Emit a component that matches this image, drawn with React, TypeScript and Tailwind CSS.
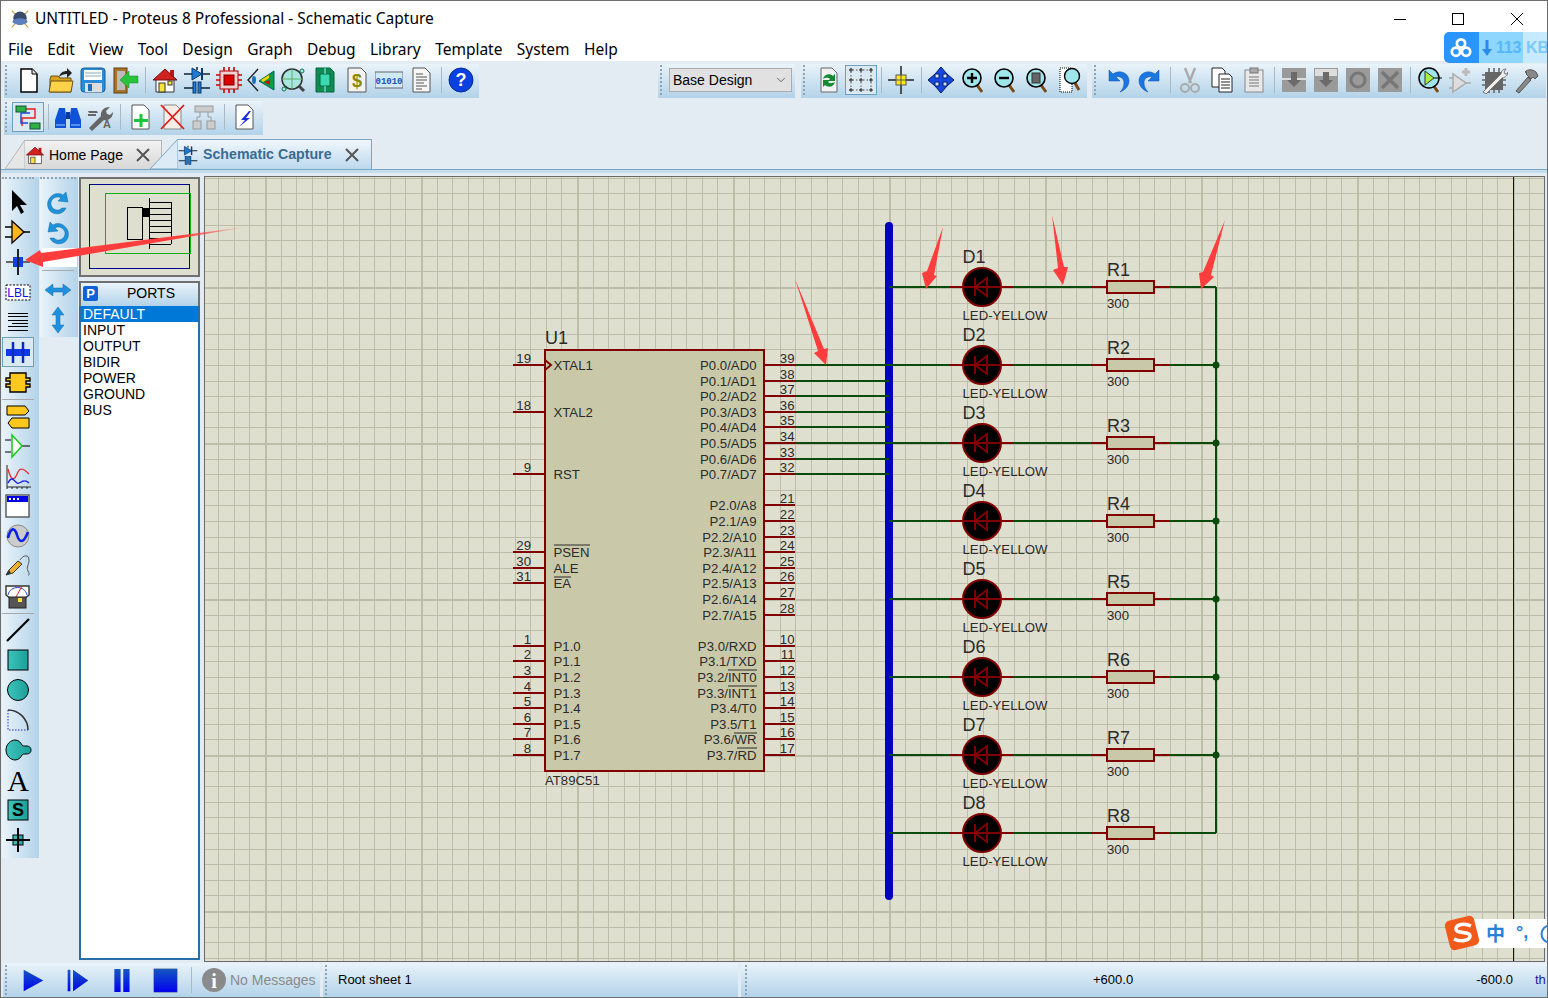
import React from "react";
import { ChevronDown } from "lucide-react";

const Ico = ({ children }: { children: React.ReactNode }) => (
  <svg viewBox="0 0 28 28" className="h-7 w-7">
    {children}
  </svg>
);

const Mag = ({ children }: { children?: React.ReactNode }) => (
  <Ico>
    <path d="M18 19l5 7" stroke="#7a4a12" strokeWidth="3" />
    <circle cx="13" cy="12" r="9" fill="#9fe6ec" stroke="#000" strokeWidth="1.6" />
    {children}
  </Ico>
);

const CloseX = () => (
  <svg viewBox="0 0 14 14" className="h-[14px] w-[14px]">
    <path d="M1 1l12 12M13 1L1 13" stroke="#555" strokeWidth="2" />
  </svg>
);

// ---- toolbar icons ----
const icons: Record<string, React.ReactNode> = {
  new: (
    <Ico>
      <path d="M6 3h11l5 5v18H6z" fill="#fff" stroke="#000" strokeWidth="1.5" />
      <path d="M17 3v5h5" fill="#ddd" stroke="#000" />
    </Ico>
  ),
  open: (
    <Ico>
      <path d="M3 13l1-3h7l2 2h11v14H3z" fill="#d9a21c" stroke="#6a5010" />
      <path d="M2 26l2-11h22l-2 11z" fill="#ffd24a" stroke="#6a5010" />
      <path d="M12 11c1-4 4-6 8-6V2l5 5-5 5V8c-3 0-6 1-8 3z" fill="#222" />
    </Ico>
  ),
  save: (
    <Ico>
      <rect x="2" y="2" width="24" height="24" rx="3" fill="#2a8bd6" stroke="#1a5f9c" />
      <rect x="5" y="4" width="18" height="10" fill="#fff" />
      <path d="M6 7h16M6 10h16" stroke="#8ab" />
      <rect x="6" y="17" width="17" height="9" fill="#ddd" />
      <rect x="9" y="18" width="4" height="7" fill="#1f6fb5" />
    </Ico>
  ),
  exit: (
    <Ico>
      <rect x="3" y="2" width="13" height="25" fill="#a9742a" stroke="#5e3f0f" />
      <rect x="6" y="5" width="8" height="19" fill="#bbb" />
      <path d="M27 10h-9V5l-9 9 9 8v-5h9z" fill="#28c23c" stroke="#1a8a2a" strokeWidth=".5" />
    </Ico>
  ),
  home: (
    <Ico>
      <path d="M5 13h18v13H5z" fill="#fff" stroke="#333" />
      <path d="M19 4h4v8h-4z" fill="#c01818" />
      <path d="M14 3L2 14h24z" fill="#d02020" stroke="#701010" />
      <rect x="8" y="17" width="6" height="9" fill="#ffe23a" stroke="#333" />
      <rect x="17" y="15" width="4" height="4" fill="#ffe23a" stroke="#333" />
    </Ico>
  ),
  comp: (
    <Ico>
      <path d="M1 8h26M1 22h9M18 22h9M14 1v3" stroke="#123" strokeWidth="1.5" />
      <path d="M9 2l10 6-10 6z" fill="#1e7ad0" stroke="#0b3a70" />
      <path d="M19 2v12" stroke="#0b3a70" strokeWidth="2" />
      <rect x="10" y="16" width="3" height="11" fill="#1e7ad0" stroke="#0b3a70" />
      <rect x="15" y="16" width="3" height="11" fill="#1e7ad0" stroke="#0b3a70" />
    </Ico>
  ),
  chip: (
    <Ico>
      <rect x="5" y="5" width="18" height="18" fill="#f4d0d0" stroke="#a00" />
      <rect x="9" y="9" width="10" height="10" fill="#d80000" stroke="#700" />
      <path d="M1 9h4M1 14h4M1 19h4M23 9h4M23 14h4M23 19h4M9 1v4M14 1v4M19 1v4M9 23v4M14 23v4M19 23v4" stroke="#c00" strokeWidth="1.6" />
    </Ico>
  ),
  eye: (
    <Ico>
      <path d="M11 3L1 14l10 11" fill="none" stroke="#222" strokeWidth="1.4" />
      <ellipse cx="7" cy="14" rx="2" ry="4" fill="#1e6fc0" />
      <path d="M27 5v19l-15-9z" fill="#0a9a48" stroke="#065" />
      <path d="M14 14l8-5v3l-6 4z" fill="#ffd800" />
      <path d="M17 16l6-2v5z" fill="#d01010" />
    </Ico>
  ),
  scope: (
    <Ico>
      <circle cx="13" cy="13" r="10" fill="#a9e6e0" stroke="#333" strokeWidth="1.6" />
      <path d="M13 3v20M3 13h20" stroke="#5ab06a" />
      <circle cx="23" cy="5" r="2" fill="#8fd" stroke="#265" />
      <circle cx="5" cy="23" r="2" fill="#8fd" stroke="#265" />
      <path d="M20 20l5 5" stroke="#444" strokeWidth="3" />
    </Ico>
  ),
  pcb: (
    <Ico>
      <path d="M5 2h14l4 4v20H5z" fill="#128a52" stroke="#064" />
      <rect x="9" y="8" width="10" height="12" fill="#3cd9b0" stroke="#064" />
      <path d="M14 2v6M14 20v6" stroke="#8fe" />
    </Ico>
  ),
  dollar: (
    <Ico>
      <path d="M5 2h13l5 5v19H5z" fill="#f2f2f2" stroke="#555" />
      <text x="14" y="21" textAnchor="middle" fontSize="18" fontWeight="700" fill="#8a8a00">$</text>
    </Ico>
  ),
  bin: (
    <Ico>
      <rect x="0" y="6" width="28" height="16" fill="#cfe9f5" stroke="#667" />
      <text x="14" y="18" textAnchor="middle" fontSize="9" fontWeight="700" fill="#1a4fc0" fontFamily="Liberation Mono">01010</text>
    </Ico>
  ),
  page: (
    <Ico>
      <path d="M6 2h12l5 5v19H6z" fill="#f6f6f6" stroke="#555" />
      <path d="M9 8h7M9 11h11M9 14h11M9 17h8M9 20h11M9 23h6" stroke="#555" />
    </Ico>
  ),
  help: (
    <Ico>
      <circle cx="14" cy="14" r="12" fill="#0a3fe0" stroke="#0a2aa0" />
      <text x="14" y="20" textAnchor="middle" fontSize="18" fontWeight="700" fill="#fff">?</text>
    </Ico>
  ),
  hier: (
    <Ico>
      <path d="M12 6h9v9H8v8" fill="none" stroke="#e02020" strokeWidth="1.4" />
      <path d="M16 10H7v10h7" fill="none" stroke="#2040e0" strokeWidth="1.4" />
      <rect x="2" y="3" width="10" height="6" fill="#30b040" stroke="#154" />
      <rect x="16" y="20" width="10" height="6" fill="#30b040" stroke="#154" />
    </Ico>
  ),
  binoc: (
    <Ico>
      <path d="M5 5h6l1 8v12H1v-8zM17 5h6l4 12v8H16V13z" fill="#0f52d8" />
      <rect x="12" y="9" width="4" height="7" fill="#0a3aa0" />
      <path d="M2 22h9M17 22h9" stroke="#9cf" />
    </Ico>
  ),
  wrenchA: (
    <Ico>
      <path d="M2 8h9l1 2h-9zM2 11h8v2H2zM3 25l12-12c-1-4 2-9 9-9l-4 4 1 3 3 1 3-3c0 6-5 9-9 8L6 28z" fill="#666" />
      <text x="21" y="25" textAnchor="middle" fontSize="11" fontWeight="700" fill="#666">A</text>
    </Ico>
  ),
  plus: (
    <Ico>
      <path d="M6 2h12l5 5v19H6z" fill="#fff" stroke="#555" />
      <path d="M15 11v13M8 17.500h14" stroke="#18c83a" strokeWidth="3" />
    </Ico>
  ),
  xpage: (
    <Ico>
      <path d="M6 2h12l5 5v19H6z" fill="#f6eee6" stroke="#888" />
      <path d="M3 2l23 24M26 2L3 26" stroke="#e01818" strokeWidth="1.8" />
    </Ico>
  ),
  tree: (
    <Ico>
      <rect x="5" y="3" width="18" height="6" fill="#ccc" stroke="#999" />
      <rect x="3" y="18" width="8" height="8" fill="#ccc" stroke="#999" />
      <rect x="17" y="18" width="8" height="8" fill="#ccc" stroke="#999" />
      <path d="M10 9v5H7v4M18 9v5h3v4" fill="none" stroke="#999" />
    </Ico>
  ),
  bolt: (
    <Ico>
      <path d="M6 2h12l5 5v19H6z" fill="#fff" stroke="#555" />
      <path d="M19 8l-8 9h4l-6 7 11-9h-4l5-7z" fill="#1a2fe0" />
    </Ico>
  ),
  refresh: (
    <Ico>
      <path d="M6 2h11l5 5v19H6z" fill="#f2f2f2" stroke="#666" />
      <path d="M8 13c1-5 7-6 10-3l2-2v7h-7l2-2c-2-2-5-1-7 0zM20 16c-1 5-7 6-10 3l-2 2v-7h7l-2 2c2 2 5 1 7 0z" fill="#148a32" />
    </Ico>
  ),
  grid: (
    <Ico>
      <path d="M2 4h24M2 14h24M2 24h24M4 2v24M14 2v24M24 2v24" stroke="#555" strokeDasharray="1.500 2" />
      <path d="M2 4h4M4 2v4M12 4h4M14 2v4M22 4h4M24 2v4M2 14h4M4 12v4M12 14h4M14 12v4M22 14h4M24 12v4M2 24h4M4 22v4M12 24h4M14 22v4M22 24h4M24 22v4" stroke="#333" />
    </Ico>
  ),
  snap: (
    <Ico>
      <path d="M14 0v28M1 14h26" stroke="#222" strokeWidth="1.5" />
      <rect x="9" y="9" width="10" height="10" fill="#ffe81a" stroke="#555" />
      <path d="M14 9v10M9 14h10" stroke="#555" />
    </Ico>
  ),
  move: (
    <Ico>
      <path d="M14 1l6 7h-4v4h4V8l7 6-7 6v-4h-4v4h4l-6 7-6-7h4v-4H8v4l-7-6 7-6v4h4V8H8z" fill="#1448e0" stroke="#061a70" />
    </Ico>
  ),
  zin: (
    <Mag>
      <path d="M13 7v10M8 12h10" stroke="#000" strokeWidth="2.4" />
    </Mag>
  ),
  zout: (
    <Mag>
      <path d="M8 12h10" stroke="#000" strokeWidth="2.4" />
    </Mag>
  ),
  zfit: (
    <Mag>
      <rect x="9" y="7" width="8" height="10" fill="#666" stroke="#333" />
    </Mag>
  ),
  zarea: (
    <Ico>
      <rect x="5" y="2" width="12" height="24" fill="#fff" stroke="#000" strokeDasharray="1 1" />
      <path d="M20 17l4 7" stroke="#7a4a12" strokeWidth="3" />
      <circle cx="17" cy="10" r="7.500" fill="#9fe6ec" stroke="#000" strokeWidth="1.4" />
    </Ico>
  ),
  undo: (
    <Ico>
      <path d="M5 4v11h11l-4-4c4-1 8 1 8 6 0 4-2 7-4 9 5-2 9-6 9-11 0-8-9-12-16-7z" fill="#1a76e0" stroke="#0e4fb0" strokeWidth=".5" />
    </Ico>
  ),
  redo: (
    <Ico>
      <path d="M23 4v11H12l4-4c-4-1-8 1-8 6 0 4 2 7 4 9-5-2-9-6-9-11 0-8 9-12 16-7z" fill="#1a76e0" stroke="#0e4fb0" strokeWidth=".5" />
    </Ico>
  ),
  cut: (
    <Ico>
      <path d="M9 2l6 15M19 2l-6 15" stroke="#aaa" strokeWidth="2.400" />
      <circle cx="9" cy="22" r="4" fill="none" stroke="#aaa" strokeWidth="2" />
      <circle cx="19" cy="22" r="4" fill="none" stroke="#aaa" strokeWidth="2" />
    </Ico>
  ),
  copy: (
    <Ico>
      <path d="M4 2h10l3 3v16H4z" fill="#fff" stroke="#222" />
      <path d="M11 8h10l3 3v15H11z" fill="#fff" stroke="#222" />
      <path d="M13 13h9M13 16h9M13 19h9M13 22h9" stroke="#222" />
    </Ico>
  ),
  paste: (
    <Ico>
      <rect x="5" y="4" width="18" height="22" fill="#e8e8e8" stroke="#888" />
      <rect x="10" y="2" width="8" height="5" fill="#aaa" stroke="#777" />
      <path d="M9 11h10M9 14h10M9 17h10M9 20h10" stroke="#777" />
    </Ico>
  ),
  bcopy: (
    <Ico>
      <rect x="2" y="2" width="24" height="24" fill="#9a9a9a" />
      <path d="M2 13h24" stroke="#ddd" strokeWidth="2" />
      <path d="M11 6h6v8h4l-7 7-7-7h4z" fill="#6a6a6a" />
    </Ico>
  ),
  bmove: (
    <Ico>
      <rect x="2" y="2" width="24" height="24" fill="#9a9a9a" />
      <rect x="3" y="3" width="22" height="7" fill="#ddd" />
      <path d="M11 6h6v8h4l-7 7-7-7h4z" fill="#6a6a6a" />
    </Ico>
  ),
  brot: (
    <Ico>
      <rect x="2" y="2" width="24" height="24" fill="#9a9a9a" />
      <circle cx="14" cy="14" r="7" fill="none" stroke="#777" strokeWidth="3" />
    </Ico>
  ),
  bdel: (
    <Ico>
      <rect x="2" y="2" width="24" height="24" fill="#9a9a9a" />
      <path d="M6 6l16 16M22 6L6 22" stroke="#777" strokeWidth="3.500" />
    </Ico>
  ),
  probe: (
    <Ico>
      <path d="M17 19l5 7" stroke="#7a4a12" strokeWidth="3" />
      <circle cx="13" cy="12" r="10" fill="#9fe6ec" stroke="#000" strokeWidth="1.500" />
      <path d="M9 5v14l9-7z" fill="#a6f03c" stroke="#333" />
      <path d="M18 12h8" stroke="#000" />
    </Ico>
  ),
  gate: (
    <Ico>
      <path d="M5 8v18l13-9z" fill="#ddd" stroke="#aaa" strokeWidth="1.500" />
      <path d="M1 12h4M1 22h4M18 17h5" stroke="#aaa" strokeWidth="1.500" />
      <path d="M18 2v8M14 6h8" stroke="#bbb" strokeWidth="3" />
    </Ico>
  ),
  chipTool: (
    <Ico>
      <rect x="5" y="6" width="18" height="18" fill="#666" />
      <path d="M2 9h3M2 14h3M2 19h3M23 9h3M23 14h3M23 19h3M9 2v4M14 2v4M19 2v4M9 24v3M14 24v3M19 24v3" stroke="#666" strokeWidth="1.600" />
      <path d="M3 26L21 8c0-3 2-5 5-5l-2 3 1 2 2 0 1-2c0 3-3 6-6 6L6 28z" fill="#eee" stroke="#777" />
    </Ico>
  ),
  hammer: (
    <Ico>
      <path d="M4 25L16 11l3 3L7 27z" fill="#888" stroke="#555" />
      <path d="M13 6c3-3 7-3 11 0l2 4-3 3-2-2-2 2-5-5 1-1z" fill="#888" stroke="#555" />
    </Ico>
  ),
  // left toolbar
  arrow: (
    <Ico>
      <path d="M8 2v21l5-5 4 8 3-2-4-7h7z" fill="#000" />
    </Ico>
  ),
  buffer: (
    <Ico>
      <path d="M1 9h7M1 19h7M18 14h8" stroke="#000" strokeWidth="1.500" />
      <path d="M8 3v22l12-11z" fill="#ffb81c" stroke="#000" strokeWidth="1.300" />
    </Ico>
  ),
  junction: (
    <Ico>
      <path d="M14 1v26" stroke="#222" strokeWidth="2" />
      <path d="M2 14h24" stroke="#666" strokeWidth="2" />
      <rect x="9" y="9" width="10" height="10" fill="#1040e0" />
      <path d="M14 8v12" stroke="#222" strokeWidth="2" />
    </Ico>
  ),
  lbl: (
    <Ico>
      <rect x="2" y="7" width="24" height="15" fill="#fff" stroke="#000" strokeDasharray="2 1.500" />
      <text x="14" y="19" textAnchor="middle" fontSize="12" fill="#1010e0">LBL</text>
    </Ico>
  ),
  lines: (
    <Ico>
      <path d="M4 5.500h20M4 8.500h20M4 12.500h20M8 15.500h16M4 18.500h20M4 22.500h20" stroke="#000" />
    </Ico>
  ),
  bus: (
    <Ico>
      <rect x="2" y="11" width="24" height="7" fill="#1038e8" />
      <path d="M9 4v21M19 4v21" stroke="#0b2ac0" strokeWidth="2.500" />
    </Ico>
  ),
  sub: (
    <Ico>
      <path d="M6 5h16v5h4v3h-4v3h4v3h-4v5H6v-5H2v-3h4v-3H2v-3h4z" fill="#ffc81c" stroke="#000" strokeWidth="1.400" />
    </Ico>
  ),
  term: (
    <Ico>
      <path d="M3 4h18l4 5-4 4H3z" fill="#ffc81c" stroke="#000" />
      <path d="M25 16H8l-4 5 4 5h17z" fill="#ffc81c" stroke="#000" />
    </Ico>
  ),
  pin: (
    <Ico>
      <path d="M1 8h6M1 20h6M18 14h8" stroke="#000" />
      <path d="M8 3v22l10-11z" fill="#fff" stroke="#1cc81c" strokeWidth="1.500" />
    </Ico>
  ),
  graph: (
    <Ico>
      <path d="M3 3v22h24M3 25v2M8 25v2M13 25v2M18 25v2M23 25v2" stroke="#222" fill="none" />
      <path d="M4 7c3 12 6 12 9 5s6-6 12 0" fill="none" stroke="#e83030" strokeWidth="1.400" />
      <path d="M4 21c4-8 6-2 9 0s6-6 12 0" fill="none" stroke="#2020e0" strokeWidth="1.400" />
    </Ico>
  ),
  win: (
    <Ico>
      <rect x="2" y="3" width="23" height="22" fill="#fff" stroke="#555" strokeWidth="1.400" />
      <rect x="3" y="4" width="21" height="6" fill="#0000e8" />
      <path d="M5 7h2M9 7h2M13 7h2" stroke="#fff" strokeWidth="2" />
    </Ico>
  ),
  sine: (
    <Ico>
      <circle cx="14" cy="14" r="11" fill="#ccc" stroke="#888" />
      <path d="M4 16c3-12 7-10 9-3s6 10 11-3" fill="none" stroke="#0a20e8" strokeWidth="2.600" />
    </Ico>
  ),
  pencil: (
    <Ico>
      <path d="M2 23l3-5 9-9 4 3-9 9z" fill="#f0b030" stroke="#333" />
      <path d="M16 8c3-5 9-6 9 0 0 5-3 7-1 11s1 4 0 4" fill="none" stroke="#555" />
      <path d="M2 23l3-5 2 3z" fill="#333" />
    </Ico>
  ),
  meter: (
    <Ico>
      <path d="M2 4h23v9l-5 4H7l-5-4z" fill="#fff" stroke="#333" strokeWidth="1.400" />
      <path d="M4 13c2-10 17-10 19 0" fill="none" stroke="#2040e0" />
      <path d="M12 15l6-11" stroke="#e02020" />
      <rect x="5" y="15" width="17" height="11" fill="#555" stroke="#222" />
      <rect x="14" y="16" width="4" height="4" fill="#ffe23a" />
    </Ico>
  ),
  line: (
    <Ico>
      <path d="M3 25L25 3" stroke="#000" strokeWidth="2.200" />
    </Ico>
  ),
  square: (
    <Ico>
      <rect x="4" y="4" width="20" height="20" fill="url(#teal)" stroke="#000" />
    </Ico>
  ),
  circle: (
    <Ico>
      <circle cx="14" cy="14" r="10.500" fill="url(#teal)" stroke="#000" />
    </Ico>
  ),
  arc: (
    <Ico>
      <path d="M4 4v20h20" fill="none" stroke="#2a2ae0" strokeDasharray="1.500 1.500" />
      <path d="M4 4c11 0 20 9 20 20" fill="none" stroke="#333" strokeWidth="1.500" />
    </Ico>
  ),
  blob: (
    <Ico>
      <path d="M2 14c0-6 5-10 9-10s6 3 7 5c1 1 2 1 4 1 4 0 5 2 5 4s-1 4-5 4c-2 0-3 0-4 1-1 2-3 5-7 5s-9-4-9-10z" fill="url(#teal)" stroke="#000" />
    </Ico>
  ),
  letterA: (
    <svg viewBox="0 0 36 36" className="h-9 w-9 shrink-0">
      <text x="18" y="29" textAnchor="middle" fontSize="30" fontFamily="Liberation Serif" fill="#000">A</text>
    </svg>
  ),
  letterS: (
    <Ico>
      <rect x="4" y="4" width="20" height="20" fill="url(#teal)" stroke="#000" />
      <text x="14" y="20" textAnchor="middle" fontSize="18" fontWeight="700" fill="#000">S</text>
    </Ico>
  ),
  marker: (
    <Ico>
      <rect x="9" y="9" width="10" height="10" fill="url(#teal)" stroke="#000" />
      <path d="M14 2v24M2 14h24" stroke="#000" strokeWidth="2" />
    </Ico>
  ),
  rotCw: (
    <Ico>
      <path d="M22 18c-2 5-8 7-13 5S2 14 5 9s9-7 14-4l3-3 2 10-10-1 3-3c-3-2-7-1-9 2s-1 7 2 9 6 1 8-1z" fill="#1f92d8" stroke="#1668a8" strokeWidth=".5" />
    </Ico>
  ),
  rotCcw: (
    <Ico>
      <path d="M6 18c2 5 8 7 13 5s7-9 4-14-9-7-14-4L6 2 4 12l10-1-3-3c3-2 7-1 9 2s1 7-2 9-6 1-8-1z" fill="#1f92d8" stroke="#1668a8" strokeWidth=".5" />
    </Ico>
  ),
  flipH: (
    <Ico>
      <path d="M1 14l8-6v4h10V8l8 6-8 6v-4H9v4z" fill="#2090dc" stroke="#176aa6" strokeWidth=".5" />
    </Ico>
  ),
  flipV: (
    <Ico>
      <path d="M14 1l6 8h-4v10h4l-6 8-6-8h4V9H8z" fill="#2090dc" stroke="#176aa6" strokeWidth=".5" />
    </Ico>
  ),
  tabHome: (
    <Ico>
      <path d="M5 13h18v13H5z" fill="#fff" stroke="#333" />
      <path d="M19 4h4v8h-4z" fill="#c01818" />
      <path d="M14 3L2 14h24z" fill="#d02020" stroke="#701010" />
      <rect x="8" y="17" width="6" height="9" fill="#ffe23a" stroke="#333" />
    </Ico>
  ),
};

const Btn = ({ name, active }: { name: string; active?: boolean }) => (
  <div
    className={`flex h-[30px] w-8 items-center justify-center ${
      active ? "border border-[#6f9fbf] bg-[#dbe9f3]" : ""
    }`}
  >
    {icons[name]}
  </div>
);

const Sep = () => (
  <div className="flex w-2 justify-center">
    <div className="h-[26px] w-px bg-[#a9bac7]" />
  </div>
);

const Grip = ({ className }: { className: string }) => (
  <div className={`h-[30px] w-0 border-l-2 border-dotted border-[#8ea4b4] ${className}`} />
);

const barBg = "bg-gradient-to-b from-[#e9f3fa] to-[#b3d3e9]";
const colBg = "bg-gradient-to-r from-[#e9f3fa] to-[#b3d3e9]";

// a run of buttons, "|" gives a separator
const Tools = ({ list, active }: { list: string; active?: string }) => (
  <>
    {list.split(" ").map((n, i) => (n === "|" ? <Sep key={i} /> : <Btn key={i} name={n} active={n === active} />))}
  </>
);

const menus = ["File", "Edit", "View", "Tool", "Design", "Graph", "Debug", "Library", "Template", "System", "Help"];
const ports = ["DEFAULT", "INPUT", "OUTPUT", "BIDIR", "POWER", "GROUND", "BUS"];

// ---- schematic ----
const gy = (k: number) => Math.round(287 + 15.6 * k);
const xLines = Array.from({ length: 92 }, (_, i) => ({ p: Math.round(109 + 15.6 * i), major: i % 10 === 0 })).filter(
  (l) => l.p > 205 && l.p < 1544
);
const yLines = Array.from({ length: 54 }, (_, i) => ({ p: Math.round(131 + 15.6 * i), major: i % 10 === 0 })).filter(
  (l) => l.p > 177 && l.p < 961
);

const leftPins: [string, string, number][] = [
  ["19", "XTAL1", 5],
  ["18", "XTAL2", 8],
  ["9", "RST", 12],
  ["29", "PSEN", 17],
  ["30", "ALE", 18],
  ["31", "EA", 19],
  ["1", "P1.0", 23],
  ["2", "P1.1", 24],
  ["3", "P1.2", 25],
  ["4", "P1.3", 26],
  ["5", "P1.4", 27],
  ["6", "P1.5", 28],
  ["7", "P1.6", 29],
  ["8", "P1.7", 30],
];

const rightPins: [string, string, number][] = [
  ["39", "P0.0/AD0", 5],
  ["38", "P0.1/AD1", 6],
  ["37", "P0.2/AD2", 7],
  ["36", "P0.3/AD3", 8],
  ["35", "P0.4/AD4", 9],
  ["34", "P0.5/AD5", 10],
  ["33", "P0.6/AD6", 11],
  ["32", "P0.7/AD7", 12],
  ["21", "P2.0/A8", 14],
  ["22", "P2.1/A9", 15],
  ["23", "P2.2/A10", 16],
  ["24", "P2.3/A11", 17],
  ["25", "P2.4/A12", 18],
  ["26", "P2.5/A13", 19],
  ["27", "P2.6/A14", 20],
  ["28", "P2.7/A15", 21],
  ["10", "P3.0/RXD", 23],
  ["11", "P3.1/TXD", 24],
  ["12", "P3.2/INT0", 25],
  ["13", "P3.3/INT1", 26],
  ["14", "P3.4/T0", 27],
  ["15", "P3.5/T1", 28],
  ["16", "P3.6/WR", 29],
  ["17", "P3.7/RD", 30],
];

const overlines = [
  [554, 590, 545],
  [554, 571, 577],
  [728, 757, 670],
  [728, 757, 686],
  [734, 757, 733],
  [737, 757, 748],
];

const red = "#800000";
const net = "#0a4a0a";
const ink = "#2b2b2b";
const arrow = "#ff3d3d";

function Schematic() {
  return (
    <svg viewBox="205 177 1339 784" className="block h-[784px] w-[1339px] text-[13.2px]">
      <rect x="205" y="177" width="1339" height="784" fill="#dfdfcf" />
      {xLines.map((l) => (
        <rect key={l.p} x={l.p} y="177" width={l.major ? 2 : 1} height="784" fill="#bdbdaa" />
      ))}
      {yLines.map((l) => (
        <rect key={l.p} x="205" y={l.p} width="1339" height={l.major ? 2 : 1} fill="#bdbdaa" />
      ))}
      <rect x="1513" y="177" width="1" height="784" fill="#00009f" />

      {/* bus */}
      <path d="M889 226V896" stroke="#0000c0" strokeWidth="8" strokeLinecap="round" />

      {/* U1 */}
      <rect x="545" y="350" width="219" height="421" fill="#c9c9aa" stroke={red} strokeWidth="2" />
      <path d="M545 360l6 5-6 5" fill="none" stroke={red} strokeWidth="2" />
      <text x="545" y="344" fontSize="18" fill={ink}>U1</text>
      <text x="545" y="785" fill={ink}>AT89C51</text>
      {leftPins.map(([n, label, k]) => (
        <g key={n}>
          <path d={`M513 ${gy(k)}h32`} stroke={red} strokeWidth="2" />
          <text x="531" y={gy(k) - 2.5} textAnchor="end" fill={ink}>{n}</text>
          <text x="553.500" y={gy(k) + 5} fill={ink}>{label}</text>
        </g>
      ))}
      {rightPins.map(([n, label, k]) => (
        <g key={n}>
          <path d={`M764 ${gy(k)}h31`} stroke={red} strokeWidth="2" />
          <text x="794.500" y={gy(k) - 2.5} textAnchor="end" fill={ink}>{n}</text>
          <text x="756.500" y={gy(k) + 5} textAnchor="end" fill={ink}>{label}</text>
          {k <= 12 && <path d={`M795 ${gy(k)}H889`} stroke={net} strokeWidth="2" />}
        </g>
      ))}
      {overlines.map(([a, b, y]) => (
        <path key={y} d={`M${a} ${y}H${b}`} stroke={ink} strokeWidth="1" />
      ))}

      {/* LED + resistor rows */}
      <path d="M1216 287V833" stroke={net} strokeWidth="2" />
      {[0, 1, 2, 3, 4, 5, 6, 7].map((i) => {
        const y = 287 + 78 * i;
        return (
          <g key={i}>
            <path d={`M889 ${y}H950M1013 ${y}H1091M1169 ${y}H1216`} stroke={net} strokeWidth="2" />
            <path d={`M950 ${y}H1013M1091 ${y}H1107M1154 ${y}H1169`} stroke={red} strokeWidth="2" />
            <circle cx="982" cy={y} r="19" fill="#000" stroke={red} strokeWidth="2" />
            <path d={`M963 ${y}H1001M975 ${y - 9}V${y + 9}M987 ${y - 9}V${y + 9}L975 ${y}Z`} fill="none" stroke={red} strokeWidth="2" />
            <rect x="1107" y={y - 6} width="47" height="12" fill="#c9c9aa" stroke={red} strokeWidth="2" />
            <text x="962.500" y={y - 24} fontSize="18" fill={ink}>{`D${i + 1}`}</text>
            <text x="962.500" y={y + 33} fill={ink}>LED-YELLOW</text>
            <text x="1107" y={y - 11} fontSize="18" fill={ink}>{`R${i + 1}`}</text>
            <text x="1107" y={y + 21} fill={ink}>300</text>
            {i > 0 && i < 7 && <circle cx="1216" cy={y} r="3.500" fill={net} />}
          </g>
        );
      })}

      {/* annotation arrows */}
      <path d="M943 227L934 275l3 1-11 13-4-16 5-2z" fill={arrow} />
      <path d="M1052 215L1064 267l4 0-5 18-10-15 5-2z" fill={arrow} />
      <path d="M1225 220L1211 275l3 2-13 12-2-16 4-1z" fill={arrow} />
      <path d="M795 279L824 349l4-1-2 17-12-12 4-2z" fill={arrow} />
    </svg>
  );
}

export default function App() {
  return (
    <div className="relative flex h-[998px] w-[1548px] flex-col overflow-hidden border border-[#6e6e6e] bg-[#e3ebf3] font-['Liberation_Sans',Arial,sans-serif] text-[14px] text-black">
      <svg className="absolute h-0 w-0">
        <defs>
          <linearGradient id="teal" x1="0" x2="1" y1="0" y2="0">
            <stop offset="0" stopColor="#3fc4bc" />
            <stop offset="1" stopColor="#19a098" />
          </linearGradient>
          <linearGradient id="play" x1="0" x2="0" y1="0" y2="1">
            <stop offset="0" stopColor="#1558c0" />
            <stop offset="1" stopColor="#0000f0" />
          </linearGradient>
        </defs>
      </svg>

      {/* title bar */}
      <div className="flex h-[40px] items-center bg-white pb-[4px] font-['Noto_Sans',sans-serif] text-[15.5px]">
        <svg viewBox="0 0 24 24" className="ml-[9px] h-[20px] w-[20px]">
          <path d="M2 2l20 20M22 2L2 22" stroke="#c9a14a" strokeWidth="1.500" />
          <ellipse cx="12" cy="11" rx="8" ry="8" fill="#3a4a6a" />
          <ellipse cx="12" cy="15" rx="9" ry="4" fill="#5d7fc0" />
        </svg>
        <span className="ml-[5px]">UNTITLED - Proteus 8 Professional - Schematic Capture</span>
        <div className="ml-auto flex items-center pr-[24px]">
          <div className="h-px w-[12px] bg-black" />
          <div className="ml-[46px] h-[12px] w-[12px] border border-black" />
          <svg viewBox="0 0 12 12" className="ml-[47px] h-[12px] w-[12px]">
            <path d="M0 0l12 12M12 0L0 12" stroke="#000" />
          </svg>
        </div>
      </div>

      {/* menu */}
      <div className="flex h-[20px] items-center gap-[14.4px] bg-white pb-[2px] pl-[7px] font-['Noto_Sans',sans-serif] text-[15.5px]">
        {menus.map((m) => (
          <span key={m}>{m}</span>
        ))}
      </div>

      {/* netdisk widget */}
      <div className="absolute left-[1443px] top-[31px] flex h-[31px] w-[105px] items-stretch overflow-hidden rounded-l-[5px] text-[16px] font-bold">
        <div className="flex w-[37px] items-center justify-center bg-[#2b95ff]">
          <svg viewBox="0 0 24 24" className="h-[22px] w-[22px]" fill="none" stroke="#fff" strokeWidth="3">
            <circle cx="12" cy="7" r="4.500" />
            <circle cx="6.500" cy="16" r="4.500" />
            <circle cx="17.500" cy="16" r="4.500" />
          </svg>
        </div>
        <div className="flex w-[47px] items-center bg-[#8fd6ff] pl-[3px] text-[#55b8ff]">
          <svg viewBox="0 0 10 16" className="h-[16px] w-[10px]">
            <path d="M3.500 0h3v9H10l-5 7-5-7h3.500z" fill="#2b8bea" />
          </svg>
          <span className="ml-[4px]">113</span>
        </div>
        <div className="flex flex-1 items-center bg-[#c8eaff] pl-[3px] text-[#7cc8ff]">KB</div>
      </div>

      {/* toolbars */}
      <div className="flex pl-[3px] pt-[3px]">
        <div className={`flex h-[34px] w-[475px] items-center pb-[2px] ${barBg}`}>
          <Grip className="ml-px mr-[6px]" />
          <Tools list="new open save exit | home comp chip eye scope pcb dollar bin page | help" />
        </div>
        <div className={`ml-[179px] flex h-[34px] w-[137px] items-center pb-[2px] ${barBg}`}>
          <Grip className="ml-[2px] mr-[7px]" />
          <div className="flex h-[24px] w-[123px] items-center justify-between border border-[#adadad] bg-[#e1e1e1] pl-[3px] pr-[3px] text-[14px]">
            <span>Base Design</span>
            <ChevronDown className="h-[14px] w-[14px] text-[#555]" strokeWidth={1.500} />
          </div>
        </div>
        <div className={`ml-[6px] flex h-[34px] w-[286px] items-center pb-[2px] ${barBg}`}>
          <Grip className="ml-[2px] mr-2" />
          <Tools list="refresh grid | snap | move zin zout zfit zarea" active="grid" />
        </div>
        <div className={`ml-[5px] flex h-[34px] w-[454px] items-center pb-[2px] ${barBg}`}>
          <Grip className="ml-[2px] mr-[6px]" />
          <Tools list="undo redo | cut copy paste | bcopy bmove brot bdel | probe gate chipTool hammer" />
        </div>
      </div>
      <div className="pl-[3px] pt-[3px]">
        <div className={`flex h-[34px] w-[259px] items-center pb-[2px] ${barBg}`}>
          <Grip className="ml-px mr-[5px]" />
          <Tools list="hier | binoc wrenchA | plus xpage tree | bolt" active="hier" />
        </div>
      </div>

      {/* tabs */}
      <div className="mt-[4px] flex h-[30px] items-end pl-[4px]">
        <svg viewBox="0 0 20 29" className="h-[29px] w-[20px]">
          <path d="M0 29L20 0V29Z" fill="#e6e6e6" stroke="#b5b5b5" />
        </svg>
        <div className="flex h-[29px] w-[137px] items-center border-t border-r border-[#b5b5b5] bg-gradient-to-b from-[#f2f2f2] to-[#d8d8d8]">
          <div className="h-[20px] w-[20px] [&>svg]:h-[20px] [&>svg]:w-[20px]">{icons.tabHome}</div>
          <span className="ml-[4px]">Home Page</span>
          <div className="ml-[13px]">
            <CloseX />
          </div>
        </div>
        <svg viewBox="0 0 28 30" className="-ml-[12px] h-[30px] w-[28px]">
          <path d="M0 30L28 0V30Z" fill="#dcebf5" stroke="#7aa7c7" />
        </svg>
        <div className="flex h-[30px] w-[194px] items-center border-t border-r border-[#7aa7c7] bg-gradient-to-b from-[#f1f7fb] to-[#bcd9ee] text-[14.2px] font-bold text-[#3a6b94]">
          <div className="h-[20px] w-[20px] [&>svg]:h-[20px] [&>svg]:w-[20px]">{icons.comp}</div>
          <span className="ml-[5px]">Schematic Capture</span>
          <div className="ml-[13px]">
            <CloseX />
          </div>
        </div>
      </div>
      <div className="h-[4px] border-t border-[#7aa7c7] bg-[#c4dded]" />

      {/* main area */}
      <div className="mt-[4px] flex h-[784px] pl-px">
        <div className={`flex h-[681px] w-[37px] flex-col items-center pr-[5px] ${colBg}`}>
          <div className="mb-2 w-full border-t-2 border-dotted border-[#8ea4b4]" />
          <Tools list="arrow buffer junction lbl lines bus sub" active="bus" />
          <div className="my-[1.500px] h-px w-[32px] bg-[#a9a9a9]" />
          <Tools list="term pin graph win sine pencil meter" />
          <div className="my-[1.500px] h-px w-[32px] bg-[#a9a9a9]" />
          <Tools list="line square circle arc blob letterA letterS marker" />
        </div>
        <div className={`ml-px flex h-[160px] w-[38px] flex-col items-center pr-[2px] ${colBg}`}>
          <div className="mb-[10px] w-full border-t-2 border-dotted border-[#8ea4b4]" />
          <Tools list="rotCw rotCcw" />
          <div className="ml-[3px] mt-[-1px] h-[19px] w-[35px] bg-white" />
          <div className="mt-[3px] h-px w-[32px] bg-[#a9a9a9]" />
          <div className="mt-[4px] flex flex-col">
            <Tools list="flipH flipV" />
          </div>
        </div>

        <div className="ml-px flex h-[783px] w-[121px] flex-col">
          <div className="h-[100px] border-2 border-[#707070] bg-[#dfdfcf]">
            <svg viewBox="81 179 117 96" className="block h-[96px] w-[117px]">
              <rect x="89.500" y="184.500" width="100" height="84" fill="none" stroke="#00008a" />
              <rect x="105.500" y="193.500" width="85" height="60" fill="none" stroke="#10b010" />
              <rect x="127.500" y="207.500" width="15" height="32" fill="none" stroke="#000" />
              <path d="M149.500 198V249M171.500 202V244M149 202.500h22M149 208.500h22M149 214.500h22M149 220.500h22M149 226.500h22M149 232.500h22M149 238.500h22M149 244.500h22" stroke="#000" fill="none" />
              <rect x="143" y="208" width="6" height="9" fill="#000" />
            </svg>
          </div>
          <div className="mt-[4px] flex h-[25px] items-center border-x-2 border-t-2 border-x-[#707070] border-t-[#707070] bg-gradient-to-b from-[#e9f3fa] to-[#b3d3e9] pb-[2px]">
            <div className="ml-[2px] flex h-[15px] w-[15px] items-center justify-center rounded-[2px] bg-[#1060d8] text-[13px] font-bold leading-none text-white">
              P
            </div>
            <span className="ml-[29px] text-[14px]">PORTS</span>
          </div>
          <div className="flex-1 border-2 border-t-0 border-[#2a6ea8] bg-white text-[14px] leading-[16px]">
            {ports.map((p, i) => (
              <div key={p} className={`h-[16px] pl-[2px] ${i === 0 ? "bg-[#0078d7] text-white" : ""}`}>
                {p}
              </div>
            ))}
          </div>
        </div>

        <div className="ml-[4px] -mt-px h-[786px] w-[1341px] border border-[#6b6b6b]">
          <Schematic />
        </div>
      </div>

      {/* status bar */}
      <div className="mt-[2px] flex h-[34px] pl-[2px] text-[13px]">
        <div className={`flex w-[317px] shrink-0 items-center ${barBg}`}>
          <Grip className="ml-[2px] mr-[4px]" />
          {[
            <path key="p" d="M3 2v24l22-12z" fill="url(#play)" />,
            <path key="s" d="M3 2v24h3V2zM9 2v24l17-12z" fill="url(#play)" />,
            <path key="a" d="M6 1h7v26H6zM16 1h7v26h-7z" fill="url(#play)" />,
            <rect key="t" x="1" y="1" width="26" height="26" fill="url(#play)" stroke="#456" strokeWidth=".5" />,
          ].map((shape, i) => (
            <div key={i} className="flex w-11 justify-center">
              <svg viewBox="0 0 28 28" className="h-[25px] w-[25px]">{shape}</svg>
            </div>
          ))}
          <div className="ml-[4px] h-[26px] w-px bg-[#a9bac7]" />
          <svg viewBox="0 0 24 24" className="ml-[10px] h-[24px] w-[24px]">
            <circle cx="12" cy="12" r="12" fill="#8a8a8a" />
            <text x="12" y="20" textAnchor="middle" fontSize="20" fontWeight="700" fontFamily="Liberation Serif" fill="#fff">i</text>
          </svg>
          <span className="ml-[4px] text-[14px] text-[#8a8a8a]">No Messages</span>
        </div>
        <div className={`ml-[3px] flex w-[415px] shrink-0 items-center ${barBg}`}>
          <Grip className="ml-[2px] mr-[11px]" />
          <span>Root sheet 1</span>
        </div>
        <div className={`ml-[3px] flex min-w-0 flex-1 items-center ${barBg}`}>
          <Grip className="ml-[4px]" />
          <span className="ml-[346px] shrink-0">+600.0</span>
          <span className="ml-[343px] shrink-0">-600.0</span>
          <span className="ml-[22px] shrink-0 text-[#2a1a9a]">th</span>
        </div>
      </div>

      {/* input method bar */}
      <div className="absolute left-[1443px] top-[914px] flex h-[36px] w-[105px] items-center">
        <div className="absolute left-[30px] top-[4px] h-[29px] w-[75px] bg-white" />
        <svg viewBox="0 0 36 36" className="absolute left-0 top-0 h-[36px] w-[36px]">
          <rect x="3" y="3" width="30" height="30" rx="5" fill="#f25a1c" transform="rotate(-14 18 18)" />
          <path d="M27 11c-6-3-15-2-15 3s14 2 14 7-10 6-16 3" fill="none" stroke="#fff" strokeWidth="3.500" />
        </svg>
        <span className="absolute left-[42px] top-[7px] font-['Noto_Sans_CJK_SC',sans-serif] text-[19px] font-bold leading-[22px] text-[#2a80d6]">
          中
        </span>
        <span className="absolute left-[72px] top-[6px] text-[18px] font-bold leading-[22px] text-[#2a80d6]">°,</span>
        <svg viewBox="0 0 20 20" className="absolute left-[96px] top-[9px] h-[20px] w-[20px]">
          <circle cx="10" cy="10" r="8.500" fill="none" stroke="#2a80d6" strokeWidth="2" />
        </svg>
      </div>

      {/* long annotation arrow, crosses the side panels */}
      <svg viewBox="0 0 1548 998" className="pointer-events-none absolute -left-px -top-px h-[998px] w-[1548px]">
        <path d="M246 227L43 262v5L25 260l15-10 1 3z" fill="url(#tailR)" />
        <defs>
          <linearGradient id="tailR" x1="0" x2="1" y1="0" y2="0">
            <stop offset="0" stopColor="#ff3d3d" />
            <stop offset="0.700" stopColor="#ff3d3d" />
            <stop offset="1" stopColor="#ff3d3d" stopOpacity="0.150" />
          </linearGradient>
        </defs>
      </svg>
    </div>
  );
}
